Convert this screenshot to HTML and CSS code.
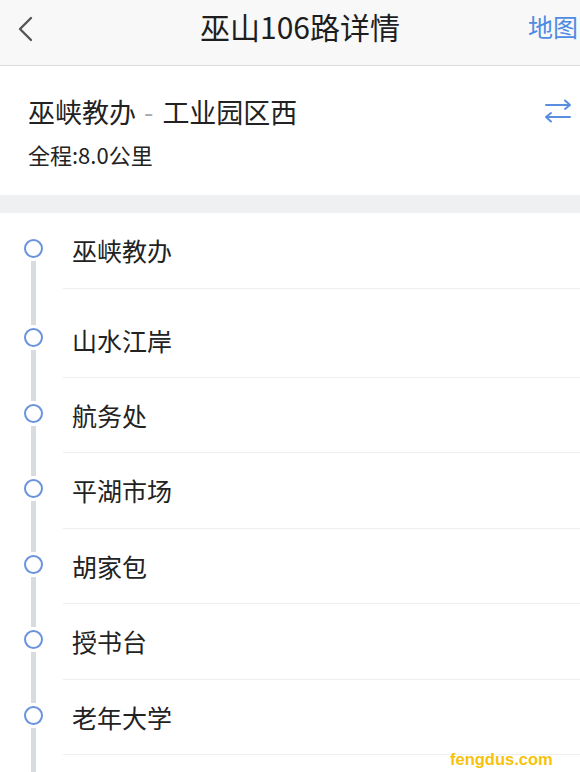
FILE: index.html
```html
<!DOCTYPE html>
<html lang="zh-CN">
<head>
<meta charset="utf-8">
<title>巫山106路详情</title>
<link rel="stylesheet" href="styles.css">
</head>
<body>
<div class="page">
  <header class="nav">
    <div class="nav-back">
      <svg width="16" height="26" viewBox="0 0 16 26"><path d="M14 2 L3 13 L14 24" fill="none" stroke="#555" stroke-width="2.4" stroke-linecap="round" stroke-linejoin="round"/></svg>
    </div>
    <h1 class="nav-title">巫山106路详情</h1>
    <div class="nav-map">地图</div>
  </header>

  <section class="route">
    <div class="route-info">
      <div class="route-name">巫峡教办<span class="route-dash">-</span>工业园区西</div>
      <div class="route-dist">全程:8.0公里</div>
    </div>
    <div class="route-swap">
      <svg width="28" height="26" viewBox="0 0 28 26"><g fill="none" stroke="#5a8fdf" stroke-width="2" stroke-linecap="round" stroke-linejoin="round"><path d="M2 7 H26 M21 2.5 L26 7 L21 11"/><path d="M26 19 H2 M7 15 L2 19 L7 23.5"/></g></svg>
    </div>
  </section>

  <div class="band"></div>

  <ul class="stops">
    <li class="stop stop-first">
      <div class="rail"><span class="seg seg-top"></span><span class="dot"></span><span class="seg seg-bottom"></span></div>
      <div class="stop-name">巫峡教办</div>
    </li>
    <li class="stop stop-tall">
      <div class="rail"><span class="seg seg-top"></span><span class="dot"></span><span class="seg seg-bottom"></span></div>
      <div class="stop-name">山水江岸</div>
    </li>
    <li class="stop">
      <div class="rail"><span class="seg seg-top"></span><span class="dot"></span><span class="seg seg-bottom"></span></div>
      <div class="stop-name">航务处</div>
    </li>
    <li class="stop">
      <div class="rail"><span class="seg seg-top"></span><span class="dot"></span><span class="seg seg-bottom"></span></div>
      <div class="stop-name">平湖市场</div>
    </li>
    <li class="stop">
      <div class="rail"><span class="seg seg-top"></span><span class="dot"></span><span class="seg seg-bottom"></span></div>
      <div class="stop-name">胡家包</div>
    </li>
    <li class="stop">
      <div class="rail"><span class="seg seg-top"></span><span class="dot"></span><span class="seg seg-bottom"></span></div>
      <div class="stop-name">授书台</div>
    </li>
    <li class="stop">
      <div class="rail"><span class="seg seg-top"></span><span class="dot"></span><span class="seg seg-bottom"></span></div>
      <div class="stop-name">老年大学</div>
    </li>
    <li class="stop">
      <div class="rail"><span class="seg seg-top"></span><span class="dot"></span><span class="seg seg-bottom"></span></div>
      <div class="stop-name">&nbsp;</div>
    </li>
  </ul>

  <div class="watermark">fengdus.com</div>
</div>
</body>
</html>
```

FILE: styles.css
```css
* { box-sizing: border-box; }
html, body { margin: 0; padding: 0; }
body {
  width: 580px;
  height: 772px;
  overflow: hidden;
  background: #fff;
  font-family: "Noto Sans CJK SC", "Noto Sans", sans-serif;
  color: #222;
}
.page { position: relative; width: 580px; height: 772px; overflow: hidden; }

.nav {
  display: flex;
  align-items: center;
  height: 66px;
  background: #f8f8f8;
  border-bottom: 1px solid #dcdcdc;
}
.nav-back {
  width: 72px;
  padding-left: 17px;
  padding-bottom: 8px;
  display: flex;
  align-items: center;
}
.nav-title {
  flex: 1;
  margin: 0;
  text-align: center;
  font-size: 30px;
  font-weight: 400;
  line-height: 36px;
  color: #1e1e1e;
  padding-bottom: 14px;
}
.nav-map {
  width: 52px;
  font-size: 25px;
  line-height: 32px;
  color: #4d8ce2;
  white-space: nowrap;
  padding-bottom: 14px;
}

.route {
  display: flex;
  align-items: flex-start;
  height: 129px;
  padding: 28px 8px 0 28px;
  background: #fff;
}
.route-info { flex: 1; }
.route-name {
  font-size: 27px;
  line-height: 36px;
  color: #222;
}
.route-dash {
  color: #aaa;
  margin: 0 9px 0 8px;
}
.route-dist {
  margin-top: 10px;
  font-size: 22px;
  line-height: 28px;
  color: #222;
}
.route-swap { padding-top: 4px; }

.band { height: 18px; background: #eff0f2; }

.stops { list-style: none; margin: 0; padding: 0; }
.stop {
  display: flex;
  height: 75.5px;
}
.stop-tall { height: 89px; }
.rail {
  width: 63px;
  flex: none;
  display: flex;
  flex-direction: column;
}
.seg {
  display: block;
  width: 5px;
  margin-left: 31px;
  background: #d9dcdf;
}
.seg-top { height: 23px; flex: none; }
.stop-tall .seg-top { height: 36px; }
.stop-first .seg-top { visibility: hidden; }
.seg-bottom { flex: 1; margin-top: 3px; }
.dot {
  display: block;
  width: 19px;
  height: 19px;
  margin: 3px 0 0 24px;
  border: 2px solid #6993dc;
  border-radius: 50%;
  background: #fff;
}
.stop-name {
  flex: 1;
  border-bottom: 1px solid #eeeeee;
  padding: 21px 0 0 9px;
  font-size: 25px;
  line-height: 32px;
  color: #222;
}
.stop-tall .stop-name { padding-top: 35px; }

.watermark {
  position: absolute;
  left: 450px;
  top: 750px;
  font-family: "Liberation Sans", Arial, sans-serif;
  font-weight: 700;
  font-size: 16.5px;
  color: #f6c30a;
}
```
